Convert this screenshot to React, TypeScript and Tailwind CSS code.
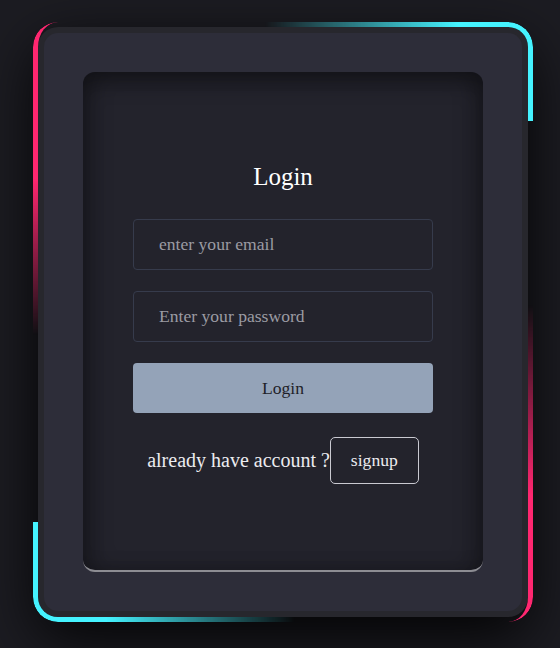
import React from 'react';

const serif = { fontFamily: '"Liberation Serif", "Times New Roman", serif' };

const NeonFrame: React.FC = () => (
  <>
    {/* cyan top-right corner */}
    <div className="pointer-events-none absolute top-0 right-0 h-[99px] w-[268px] rounded-tr-[25px] border-t-[5px] border-r-[5px] border-[#45f3ff] [mask-image:linear-gradient(to_right,transparent,black_72%)]" />
    {/* cyan bottom-left corner */}
    <div className="pointer-events-none absolute bottom-0 left-0 h-[100px] w-[262px] rounded-bl-[25px] border-b-[5px] border-l-[5px] border-[#45f3ff] [mask-image:linear-gradient(to_left,transparent,black_72%)]" />
    {/* pink left edge */}
    <div className="pointer-events-none absolute top-0 left-0 h-[313px] w-[30px] rounded-tl-[25px] border-l-[5px] border-[#ff2770] [mask-image:linear-gradient(to_bottom,black_50%,transparent)]" />
    {/* pink right edge */}
    <div className="pointer-events-none absolute bottom-0 right-0 h-[317px] w-[30px] rounded-br-[25px] border-r-[5px] border-[#ff2770] [mask-image:linear-gradient(to_top,black_40%,transparent)]" />
  </>
);

const fieldClass =
  "h-[51px] w-[300px] rounded-[4px] border border-[#363b4c] bg-transparent pl-[25px] font-['Liberation_Serif',serif] text-[17.6px] text-white outline-none placeholder:text-[#9b9ba3]";

const App: React.FC = () => {
  return (
    <div className="min-h-screen w-full bg-[#1c1c22] pl-[33px] pt-[22px]" style={serif}>
      <div className="relative w-[500px] p-[5px]">
        <div className="h-[590px] w-[490px] rounded-[20px] bg-[#27272d] p-[6px] shadow-[0_20px_60px_rgba(0,0,0,0.9)]">
          <div className="h-full w-full rounded-[14px] bg-[#2d2d39] p-[39px]">
            <div className="flex h-full w-full flex-col items-center rounded-[12px] border-b-2 border-[#8d8d93] bg-[#23232c] pt-[91px] shadow-[inset_0_12px_20px_rgba(0,0,0,0.3),inset_12px_0_20px_rgba(0,0,0,0.18),inset_-12px_0_20px_rgba(0,0,0,0.18)]">
              <h1 className="text-[25px] leading-[1.15] text-white">Login</h1>

              <input type="email" placeholder="enter your email" className={`mt-[27px] ${fieldClass}`} />
              <input type="password" placeholder="Enter your password" className={`mt-[21px] ${fieldClass}`} />

              <button className="mt-[21px] h-[50px] w-[300px] rounded-[4px] bg-[#94a3b8] font-['Liberation_Serif',serif] text-[17.6px] text-[#1f1f29]">
                Login
              </button>

              <div className="mt-[24px] flex items-center justify-center">
                <span className="text-[20px] text-[#ececf0]">already have account ?</span>
                <button className="h-[47px] rounded-[5px] border border-[#c9c9d1] px-[20px] font-['Liberation_Serif',serif] text-[17.6px] text-[#ececf0]">
                  signup
                </button>
              </div>
            </div>
          </div>
        </div>
        <NeonFrame />
      </div>
    </div>
  );
};

export default App;
